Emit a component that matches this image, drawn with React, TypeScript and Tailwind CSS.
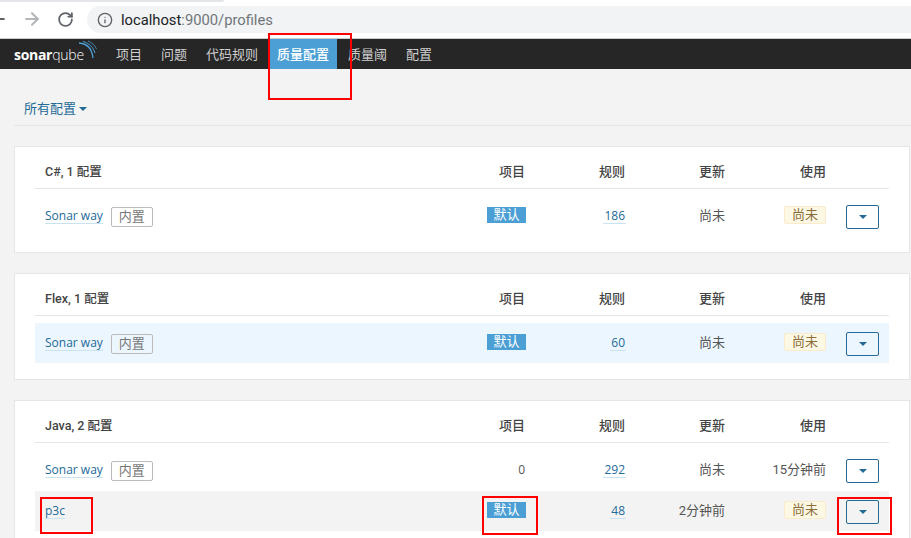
import { ArrowLeft, ArrowRight, Info, RotateCw } from 'lucide-react';

type Row = {
  name: string;
  builtIn?: boolean;
  isDefault?: boolean;
  projects?: string;
  rules: string;
  updated: string;
  used: string;
  usedWarn?: boolean;
  bg?: string;
};

const groups: { title: string; rows: Row[] }[] = [
  {
    title: 'C#, 1 配置',
    rows: [{ name: 'Sonar way', builtIn: true, isDefault: true, rules: '186', updated: '尚未', used: '尚未', usedWarn: true }],
  },
  {
    title: 'Flex, 1 配置',
    rows: [{ name: 'Sonar way', builtIn: true, isDefault: true, rules: '60', updated: '尚未', used: '尚未', usedWarn: true, bg: 'bg-[#ecf6fe]' }],
  },
  {
    title: 'Java, 2 配置',
    rows: [
      { name: 'Sonar way', builtIn: true, projects: '0', rules: '292', updated: '尚未', used: '15分钟前' },
      { name: 'p3c', isDefault: true, rules: '48', updated: '2分钟前', used: '尚未', usedWarn: true, bg: 'bg-[#f3f3f3]' },
    ],
  },
];

const navItems = ['项目', '问题', '代码规则', '质量配置', '质量阈', '配置'];

function SonarLogo() {
  return (
    <div className="relative flex items-center w-[84px] h-[30px] text-white text-[14px] leading-none font-['Open_Sans',sans-serif]">
      <span className="font-bold tracking-[-0.3px] mt-[1px]">sonar</span>
      <span className="font-light tracking-[-0.2px] mt-[1px]">qube</span>
      <svg className="absolute left-[64px] top-[1px]" width="22" height="20" viewBox="0 0 22 20" fill="none" stroke="#4b9fd5">
        <path d="M1 3C9 3.5 14 9 15 18" strokeWidth="1.3" />
        <path d="M5 1.5C11 3 15.5 7.5 17 13" strokeWidth="1" />
        <path d="M10 1C14 2.5 17 5.5 18.5 9" strokeWidth="0.8" />
      </svg>
    </div>
  );
}

function Caret() {
  return <span className="block w-0 h-0 border-x-[4px] border-x-transparent border-t-[4px] border-t-[#236a97]" />;
}

function ProfileRow({ row }: { row: Row }) {
  return (
    <div className={`flex items-center h-10 pl-[10px] text-[13px] text-[#555] ${row.bg ?? ''}`}>
      <div className="flex-1 flex items-center gap-2">
        <span className="font-['Open_Sans',sans-serif] text-[12px] text-[#236a97] border-b border-[#cae3f2] leading-[15px]">{row.name}</span>
        {row.builtIn && (
          <span className="w-[42px] h-[20px] flex items-center justify-center border border-[#bbb] rounded-[2px] text-[#777] mt-[2px]">内置</span>
        )}
      </div>
      <div className="w-[60px] flex justify-end">
        {row.isDefault && (
          <span className="w-[39px] h-4 -mr-px flex items-center justify-center bg-[#4b9fd5] text-white -translate-y-px">默认</span>
        )}
        {row.projects && <span className="font-['Open_Sans',sans-serif] text-[12px]">{row.projects}</span>}
      </div>
      <div className="w-[100px] flex justify-end">
        <span className="font-['Open_Sans',sans-serif] text-[12px] text-[#236a97] border-b border-[#cae3f2] leading-[15px] px-px -mr-px">{row.rules}</span>
      </div>
      <div className="w-[100px] text-right">{row.updated}</div>
      <div className="w-[101px] flex justify-end">
        {row.usedWarn ? (
          <span className="w-[42px] h-[18px] flex items-center justify-center bg-[#fcf8e3] border border-[#faebcc] rounded-[2px] text-[#8a6d3b] -translate-y-px">{row.used}</span>
        ) : (
          <span>{row.used}</span>
        )}
      </div>
      <div className="w-[63px] flex pl-5">
        <button className="w-[33px] h-6 mt-[2px] flex items-center justify-center border border-[#236a97] rounded-[2px]">
          <Caret />
        </button>
      </div>
    </div>
  );
}

function ProfileCard({ title, rows }: { title: string; rows: Row[] }) {
  return (
    <div className="ml-[14px] mr-px bg-white border border-[#e6e6e6] px-5 pt-[9px] pb-[16px]">
      <div className="flex items-center h-[32px] pl-[10px] border-b border-[#e6e6e6] text-[13px] font-medium text-[#444] box-content">
        <div className="flex-1 text-[12.5px]">{title}</div>
        <div className="w-[60px] text-right">项目</div>
        <div className="w-[100px] text-right">规则</div>
        <div className="w-[100px] text-right">更新</div>
        <div className="w-[101px] text-right">使用</div>
        <div className="w-[63px]" />
      </div>
      <div className="pt-[7px] flex flex-col gap-px">
        {rows.map((row, i) => (
          <ProfileRow key={i} row={row} />
        ))}
      </div>
    </div>
  );
}

export default function App() {
  return (
    <div className="relative w-[911px] h-[538px] overflow-hidden bg-[#f3f3f3] font-['Roboto','Noto_Sans_CJK_SC',sans-serif]">
      {/* Browser toolbar */}
      <div className="relative h-[39px] bg-white flex items-center border-b border-[#ccc] text-[#5f6368]">
        <div className="absolute left-0 top-0 w-[224px] h-[2px] bg-[#e4e6e9] rounded-br-[2px]" />
        <ArrowLeft className="w-5 h-5 -ml-[12px] text-[#5f6368]" strokeWidth={2.5} />
        <ArrowRight className="w-5 h-5 ml-[14px] text-[#b4b7ba]" strokeWidth={2.5} />
        <RotateCw className="w-[17px] h-[17px] ml-[15px] text-[#5f6368]" strokeWidth={2.5} />
        <div className="ml-[13px] flex-1 h-[27px] mt-px bg-[#f1f3f4] rounded-l-full flex items-center pl-[10px] text-[14.75px]">
          <Info className="w-4 h-4 mr-[8px] text-[#5f6368]" />
          <span className="text-[#202124] pt-px">localhost</span>
          <span className="text-[#70757a] pt-px">:9000/profiles</span>
        </div>
      </div>

      {/* Nav */}
      <nav className="h-[30px] bg-[#262626] flex items-center pl-[14px] text-[13px] text-[#d0d0d0]">
        <SonarLogo />
        <div className="flex ml-[10px] h-full">
          {navItems.map((item) => (
            <span
              key={item}
              className={`flex items-center px-2 pt-px mr-[3px] ${item === '质量配置' ? 'bg-[#4b9fd5] text-white font-medium' : ''}`}
            >
              {item}
            </span>
          ))}
        </div>
      </nav>

      {/* Filter */}
      <div className="ml-[14px] h-[57px] border-b border-[#e6e6e6] flex items-end pb-[7px] pl-[10px] text-[13px] text-[#236a97] gap-[3px]">
        <span>所有配置</span>
        <span className="mb-[7px]"><Caret /></span>
      </div>

      <div className="mt-5 flex flex-col gap-5">
        {groups.map((g) => (
          <ProfileCard key={g.title} title={g.title} rows={g.rows} />
        ))}
      </div>

      {/* Red annotation boxes */}
      <div className="absolute left-[268px] top-[33px] w-[84px] h-[67px] border-2 border-[#ff0000]" />
      <div className="absolute left-[40px] top-[497px] w-[53px] h-[37px] border-2 border-[#ff0000]" />
      <div className="absolute left-[482px] top-[496px] w-[56px] h-[39px] border-2 border-[#ff0000]" />
      <div className="absolute left-[837px] top-[497px] w-[55px] h-[38px] border-2 border-[#ff0000]" />
    </div>
  );
}
